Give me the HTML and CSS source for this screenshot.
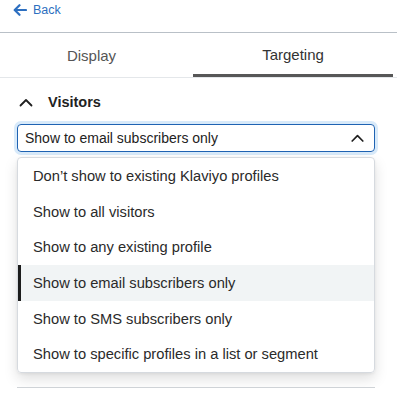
FILE: index.html
```html
<!DOCTYPE html>
<html>
<head>
<meta charset="utf-8">
<link rel="stylesheet" href="styles.css">
</head>
<body>
  <div class="topbar">
    <a class="back" href="#">
      <svg class="back-icon" width="14" height="12" viewBox="0 0 14 12"><path d="M13 6H2M6.5 1.2L1.7 6l4.8 4.8" fill="none" stroke="#2d6fc0" stroke-width="2.2" stroke-linecap="round" stroke-linejoin="round"/></svg>
      <span>Back</span>
    </a>
  </div>
  <div class="tabs">
    <div class="tab tab-first">Display</div>
    <div class="tab tab-active">Targeting</div>
  </div>
  <div class="section">
    <div class="section-head">
      <svg class="chev" width="14" height="9" viewBox="0 0 14 9"><path d="M1.5 7.5L7 2l5.5 5.5" fill="none" stroke="#1f1f1f" stroke-width="1.8" stroke-linecap="round" stroke-linejoin="round"/></svg>
      <span class="section-title">Visitors</span>
    </div>
    <div class="select">
      <span>Show to email subscribers only</span>
      <svg class="select-chev" width="13" height="8" viewBox="0 0 13 8"><path d="M1.2 7L6.5 1.7 11.8 7" fill="none" stroke="#1f1f1f" stroke-width="1.7" stroke-linecap="round" stroke-linejoin="round"/></svg>
    </div>
    <ul class="menu">
      <li class="item">Don’t show to existing Klaviyo profiles</li>
      <li class="item">Show to all visitors</li>
      <li class="item">Show to any existing profile</li>
      <li class="item item-selected">Show to email subscribers only</li>
      <li class="item">Show to SMS subscribers only</li>
      <li class="item">Show to specific profiles in a list or segment</li>
    </ul>
    <div class="rule"></div>
  </div>
</body>
</html>
```

FILE: styles.css
```css
html, body {
  margin: 0;
  padding: 0;
  background: #ffffff;
}
body {
  font-family: "Liberation Sans", Arial, sans-serif;
  color: #222;
  width: 397px;
  overflow: hidden;
}
.topbar {
  height: 33px;
  border-bottom: 1px solid #b9c0c7;
  padding: 3px 0 0 13px;
  box-sizing: border-box;
}
.back {
  display: flex;
  align-items: center;
  gap: 6px;
  color: #2d6fc0;
  text-decoration: none;
  font-size: 12.5px;
  height: 14px;
}
.back-icon {
  display: block;
}
.tabs {
  display: grid;
  grid-template-columns: 193px 200px;
  height: 45px;
  border-bottom: 1px solid #e4e7ea;
  box-sizing: border-box;
}
.tab {
  display: flex;
  align-items: center;
  justify-content: center;
  font-size: 15px;
  color: #555;
  box-sizing: border-box;
}
.tab-first {
  padding-right: 10px;
}
.tab-active {
  color: #333;
  border-bottom: 3px solid #575757;
  padding-top: 2px;
}
.section {
  padding: 0 22px 0 17px;
}
.section-head {
  display: flex;
  align-items: center;
  height: 44px;
  padding: 2px 0 0 2px;
}
.chev {
  display: block;
  margin-right: 15px;
}
.section-title {
  font-size: 14.5px;
  font-weight: bold;
  color: #222;
}
.select {
  height: 28px;
  border: 1px solid #1f63b3;
  border-radius: 4px;
  box-shadow: 0 0 0 3px #d8eafa;
  display: flex;
  align-items: center;
  justify-content: space-between;
  padding: 0 10px 0 7px;
  box-sizing: border-box;
  font-size: 14px;
  color: #222;
}
.select-chev {
  display: block;
}
.menu {
  list-style: none;
  margin: 5px 0 0 0;
  padding: 0;
  border: 1px solid #d6dadf;
  border-radius: 4px;
  box-shadow: 0 6px 14px rgba(0, 0, 0, 0.13), 0 1px 3px rgba(0, 0, 0, 0.06);
  overflow: hidden;
}
.item {
  height: 35.7px;
  display: flex;
  align-items: center;
  padding-left: 12px;
  font-size: 14.7px;
  color: #2a2a2a;
  border-left: 3px solid transparent;
}
.item-selected {
  background: #f1f4f5;
  border-left-color: #1c1c1c;
}
.rule {
  margin-top: 14px;
  height: 1px;
  background: #cfd3d7;
}
```
